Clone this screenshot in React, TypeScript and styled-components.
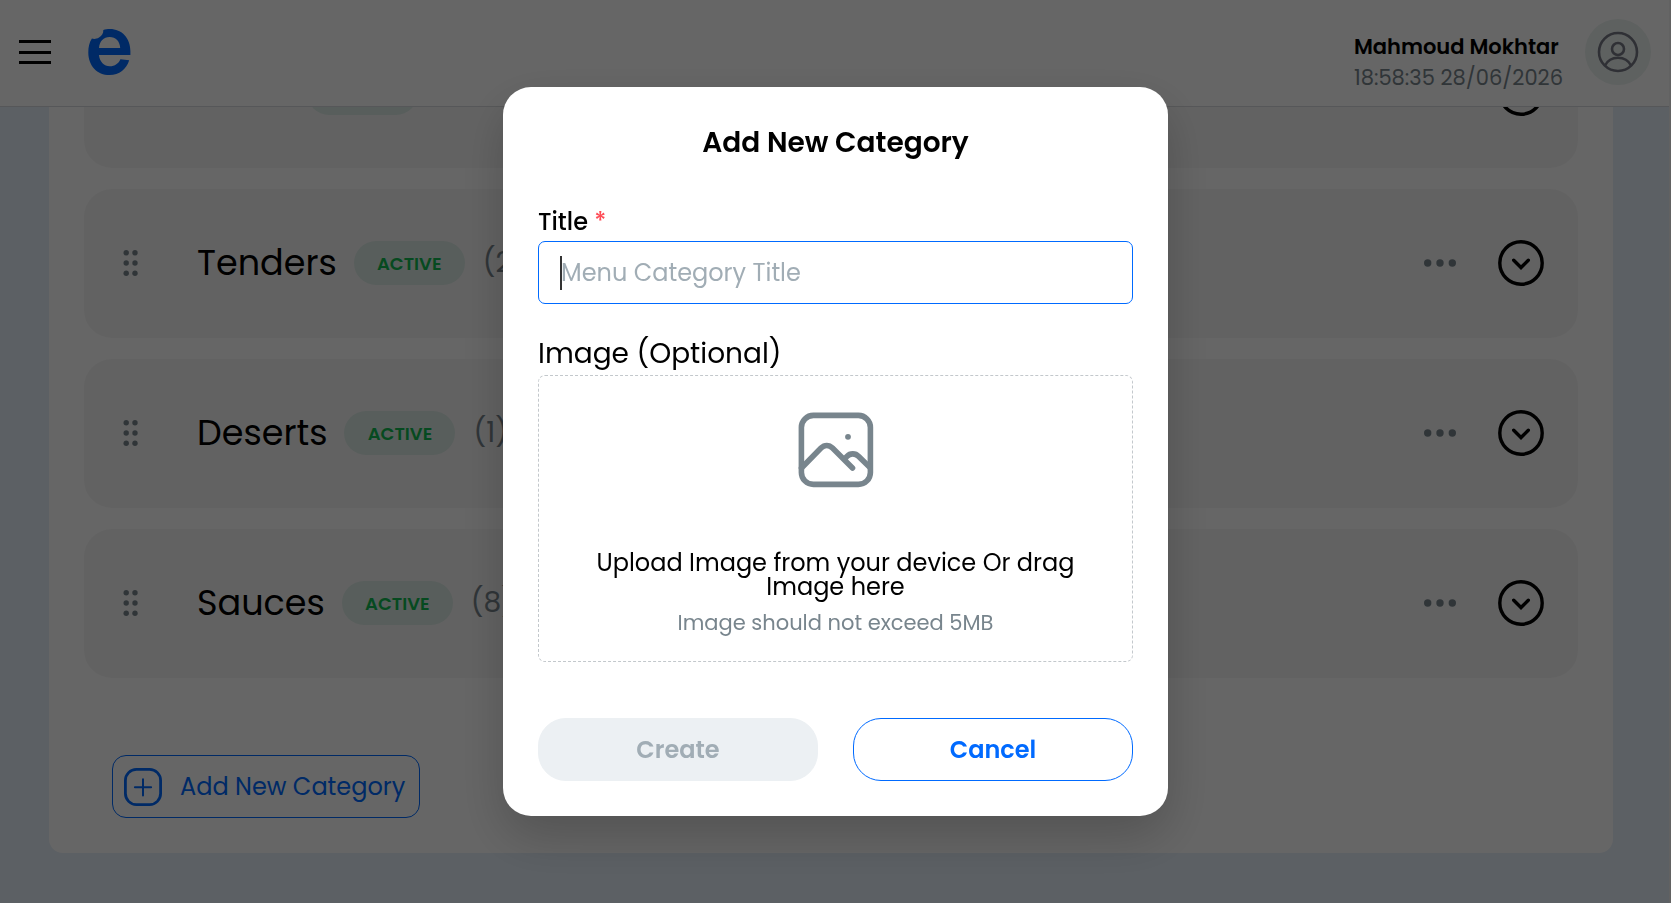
import React from "react";
import styled, { createGlobalStyle } from "styled-components";

const blue = "#006aff";
const slate = "#78858d";

const GlobalStyle = createGlobalStyle`
  *, *::before, *::after { box-sizing: border-box; }
  body {
    margin: 0;
    background: #e6effa;
    color: #000;
    font-family: Poppins, Inter, "Open Sans", sans-serif;
  }
  button, input { font: inherit; color: inherit; }
  button { padding: 0; border: 0; background: none; cursor: pointer; }
  svg { display: block; }
`;

const Page = styled.div`
  min-height: 100vh;
  border-right: 2px solid #f5f5f5;
  overflow: hidden;
`;

const Header = styled.header`
  position: relative;
  z-index: 1;
  display: flex;
  align-items: center;
  height: 107px;
  padding: 0 18px 2px 19px;
  background: #fff;
  border-bottom: 1px solid #d8dade;
`;

const MenuButton = styled.button`
  width: 32px;
  height: 24px;
  margin-right: 37px;
`;

const Logo = styled.a`
  margin-bottom: 1px;
`;

const Account = styled.div`
  display: flex;
  flex-direction: column;
  margin-left: auto;
  margin-right: 22px;
  margin-top: 20px;
`;

const AccountName = styled.strong`
  font-size: 21px;
  line-height: 31px;
  font-weight: 600;
`;

const AccountTime = styled.time`
  font-size: 21px;
  line-height: 31px;
  color: ${slate};
`;

const Avatar = styled.button`
  display: grid;
  place-items: center;
  width: 66px;
  height: 66px;
  border-radius: 50%;
  background: #ebf2f0;
`;

const Panel = styled.main`
  margin: -88px 56px 50px 49px;
  padding: 0 35px 35px;
  background: #fff;
  border-radius: 0 0 14px 14px;
`;

const CategoryList = styled.ul`
  display: flex;
  flex-direction: column;
  gap: 21px;
  margin: 0;
  padding: 0;
  list-style: none;
`;

const CategoryRow = styled.li`
  display: flex;
  align-items: center;
  height: 149px;
  padding: 0 34px 1px 39px;
  background: #f6f6f6;
  border-radius: 28px;
`;

const DragHandle = styled.button`
  margin-right: 58px;
  cursor: grab;
`;

const CategoryName = styled.h2`
  margin: 0;
  font-size: 35px;
  line-height: 54px;
  font-weight: 400;
`;

const Badge = styled.span`
  display: grid;
  place-items: center;
  width: 111px;
  height: 44px;
  margin: 0 18px 0 17px;
  border-radius: 22px;
  background: #dcebe6;
  color: #10b850;
  font-size: 18px;
  font-weight: 600;
`;

const Count = styled.span`
  color: ${slate};
  font-size: 28px;
`;

const MoreButton = styled.button`
  margin-left: auto;
  margin-right: 42px;
`;

const AddButton = styled.button`
  display: flex;
  align-items: center;
  gap: 18px;
  height: 63px;
  margin: 77px 0 0 28px;
  padding: 0 14px 0 11px;
  border: 1px solid ${blue};
  border-radius: 14px;
  color: ${blue};
  font-size: 24px;
`;

const Overlay = styled.div`
  position: fixed;
  inset: 0;
  z-index: 2;
  display: grid;
  place-items: center;
  background: rgba(0, 0, 0, 0.6);
`;

const Dialog = styled.form`
  width: 665px;
  max-width: 100%;
  padding: 35px;
  background: #fff;
  border-radius: 28px;
  box-shadow: 0 20px 50px rgba(0, 0, 0, 0.2);
`;

const DialogTitle = styled.h1`
  margin: 0 0 45px;
  text-align: center;
  font-size: 28px;
  line-height: 42px;
  font-weight: 600;
`;

const TitleLabel = styled.label`
  display: block;
  font-size: 24px;
  line-height: 26px;
  font-weight: 500;
  margin-bottom: 6px;
`;

const Required = styled.span`
  color: #ff4b55;
`;

const InputWrap = styled.div`
  position: relative;
  margin-bottom: 28px;
`;

const TitleInput = styled.input`
  display: block;
  width: 100%;
  height: 63px;
  padding: 0 22px;
  border: 1px solid ${blue};
  border-radius: 7px;
  outline: none;
  caret-color: transparent;
  font-size: 24px;
  &::placeholder { color: #a1adb5; opacity: 1; }
`;

const Caret = styled.span`
  position: absolute;
  left: 22px;
  top: 15px;
  width: 2px;
  height: 34px;
  background: #333;
`;

const ImageLabel = styled.label`
  display: block;
  font-size: 28px;
  line-height: 43px;
`;

const DropZone = styled.label`
  display: flex;
  flex-direction: column;
  align-items: center;
  height: 287px;
  padding: 36px 35px 0;
  border: 1px dashed #c3c8cc;
  border-radius: 7px;
  text-align: center;
  cursor: pointer;
`;

const FileInput = styled.input`
  position: absolute;
  width: 1px;
  height: 1px;
  opacity: 0;
`;

const DropText = styled.span`
  max-width: 500px;
  margin-top: 63px;
  font-size: 24px;
  line-height: 24px;
`;

const DropHint = styled.span`
  margin-top: 10px;
  color: ${slate};
  font-size: 21px;
  line-height: 28px;
`;

const Actions = styled.div`
  display: grid;
  grid-template-columns: 1fr 1fr;
  gap: 35px;
  margin-top: 56px;
`;

const ActionButton = styled.button<{ $outlined?: boolean }>`
  height: 63px;
  border: 1px solid ${(p) => (p.$outlined ? blue : "#ecf0f3")};
  border-radius: 28px;
  background: ${(p) => (p.$outlined ? "#fff" : "#ecf0f3")};
  color: ${(p) => (p.$outlined ? blue : "#a1adb5")};
  font-size: 24px;
  font-weight: 600;
`;

const categories = [
  { name: "Sides", count: 7 },
  { name: "Tenders", count: 2 },
  { name: "Deserts", count: 1 },
  { name: "Sauces", count: 8 },
];

const MenuIcon = () => (
  <svg width="32" height="24" viewBox="0 0 32 24" fill="#000">
    <path d="M0 0h32v3H0zM0 11h32v3H0zM0 21h32v3H0z" />
  </svg>
);

const LogoIcon = () => (
  <svg width="43" height="46" viewBox="0 0 43 46" fill="none">
    <path
      fill={blue}
      fillRule="evenodd"
      d="M15.3 1.1C17.3.3 19.5 0 21.8 0C34 0 42.4 9.3 42.4 22.2V26H10.9C11.8 33 16 37.2 21.8 37.2C26.8 37.2 30.7 34.5 32.4 30.2L41.2 31.2C38.5 40 31.3 46 21.6 46C9 46 .3 36.6.3 23.4C.3 18 1.3 13.3 3.9 9.4C5.7 10.2 8.3 10.1 11 8.5C14 6.7 15.5 4.4 15.3 1.1ZM11 19H32.2C31.8 12.3 28 8 21.6 8C15.6 8 11.5 12.3 11 19Z"
    />
  </svg>
);

const UserIcon = () => (
  <svg width="42" height="42" viewBox="0 0 42 42" fill="none" stroke="#777985" strokeWidth="2.6">
    <circle cx="21" cy="21" r="19" />
    <circle cx="21" cy="18" r="6" />
    <path d="M8 34.5C10.5 29.5 15.2 26.7 21 26.7S31.5 29.5 34 34.5" />
  </svg>
);

const DragIcon = () => (
  <svg width="16" height="28" viewBox="0 0 16 28" fill={slate}>
    {[3.8, 14, 24.2].map((y) => (
      <React.Fragment key={y}>
        <circle cx="3.2" cy={y} r="2.7" />
        <circle cx="12" cy={y} r="2.7" />
      </React.Fragment>
    ))}
  </svg>
);

const MoreIcon = () => (
  <svg width="32" height="8" viewBox="0 0 32 8" fill={slate}>
    <circle cx="3.7" cy="4" r="3.7" />
    <circle cx="16" cy="4" r="3.7" />
    <circle cx="28.3" cy="4" r="3.7" />
  </svg>
);

const ExpandIcon = () => (
  <svg width="46" height="46" viewBox="0 0 46 46" fill="none" stroke="#000" strokeWidth="3.4">
    <circle cx="23" cy="23" r="21.2" />
    <path d="M15.7 20.3L23 27.5L30.3 20.3" strokeLinecap="round" />
  </svg>
);

const PlusIcon = () => (
  <svg width="38" height="38" viewBox="0 0 38 38" fill="none" stroke="currentColor">
    <rect x="1.4" y="1.4" width="35.2" height="35.2" rx="11" strokeWidth="2.8" />
    <path d="M19 11.2V27.4M10.9 19.3H27.1" strokeWidth="2" strokeLinecap="round" />
  </svg>
);

const ImageIcon = () => (
  <svg width="76" height="76" viewBox="0 0 76 76" fill="none" stroke={slate} strokeWidth="5.6">
    <rect x="3.4" y="3.4" width="69" height="69" rx="12" />
    <path d="M3.5 56L23 36C26.5 32.6 31 32.6 34.5 36L54.5 56" strokeLinecap="round" />
    <path d="M46.5 47L49 44.3C52 41 57.5 41 60.5 44.3L72 55.5" />
    <circle cx="50" cy="24.8" r="2.9" fill={slate} stroke="none" />
  </svg>
);

export default function App() {
  return (
    <>
      <GlobalStyle />
      <Page>
        <Header>
          <MenuButton type="button" aria-label="Open menu"><MenuIcon /></MenuButton>
          <Logo href="#" aria-label="Home"><LogoIcon /></Logo>
          <Account>
            <AccountName>Mahmoud Mokhtar</AccountName>
            <AccountTime dateTime="2026-06-28T18:58:35">18:58:35 28/06/2026</AccountTime>
          </Account>
          <Avatar type="button" aria-label="Account"><UserIcon /></Avatar>
        </Header>
        <Panel>
          <CategoryList>
            {categories.map((category) => (
              <CategoryRow key={category.name}>
                <DragHandle type="button" aria-label={`Reorder ${category.name}`}><DragIcon /></DragHandle>
                <CategoryName>{category.name}</CategoryName>
                <Badge>ACTIVE</Badge>
                <Count>({category.count})</Count>
                <MoreButton type="button" aria-label={`${category.name} options`}><MoreIcon /></MoreButton>
                <button type="button" aria-label={`Expand ${category.name}`}><ExpandIcon /></button>
              </CategoryRow>
            ))}
          </CategoryList>
          <AddButton type="button"><PlusIcon />Add New Category</AddButton>
        </Panel>
      </Page>
      <Overlay>
        <Dialog role="dialog" aria-modal="true" aria-labelledby="dialog-title">
          <DialogTitle id="dialog-title">Add New Category</DialogTitle>
          <TitleLabel htmlFor="category-title">Title <Required>*</Required></TitleLabel>
          <InputWrap>
            <TitleInput id="category-title" placeholder="Menu Category Title" required />
            <Caret />
          </InputWrap>
          <ImageLabel htmlFor="category-image">Image (Optional)</ImageLabel>
          <DropZone>
            <FileInput id="category-image" type="file" accept="image/*" />
            <ImageIcon />
            <DropText>Upload Image from your device Or drag Image here</DropText>
            <DropHint>Image should not exceed 5MB</DropHint>
          </DropZone>
          <Actions>
            <ActionButton type="submit" disabled>Create</ActionButton>
            <ActionButton type="button" $outlined>Cancel</ActionButton>
          </Actions>
        </Dialog>
      </Overlay>
    </>
  );
}
